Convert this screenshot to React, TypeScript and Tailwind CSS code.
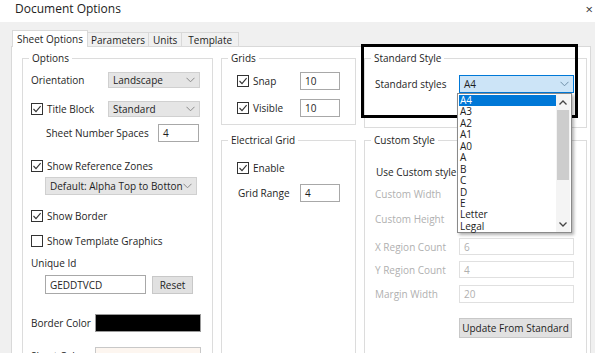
import React from 'react';

const Check = ({ checked = true }: { checked?: boolean }) => (
  <svg width="12" height="12" viewBox="0 0 12 12" className="shrink-0">
    <rect x="0.5" y="0.5" width="11" height="11" fill="#fff" stroke="#333" />
    {checked && <polyline points="2.5,6 5,8.6 9.6,3.2" fill="none" stroke="#333" strokeWidth="1.1" />}
  </svg>
);

const Chevron = ({ color = '#8a8a8a' }: { color?: string }) => (
  <svg width="9" height="6" viewBox="0 0 9 6" className="shrink-0">
    <polyline points="0.5,0.8 4.5,4.8 8.5,0.8" fill="none" stroke={color} strokeWidth="1" />
  </svg>
);

const Group = ({ label, className, children }: { label: string; className: string; children?: React.ReactNode }) => (
  <div className={`relative border border-[#dcdcdc] ${className}`}>
    <span className="absolute -top-[8px] left-[6px] bg-white px-[3px] leading-[14px]">{label}</span>
    {children}
  </div>
);

const Select = ({ value, className }: { value: string; className: string }) => (
  <div className={`flex items-center justify-between bg-[#e5e5e5] border border-[#d0d0d0] pl-[4px] pr-[4px] overflow-hidden ${className}`}>
    <span className="whitespace-nowrap overflow-hidden">{value}</span>
    <Chevron />
  </div>
);

const Input = ({ value, className, disabled = false }: { value: string; className: string; disabled?: boolean }) => (
  <div
    className={`flex items-center bg-white border pl-[4px] ${
      disabled ? 'border-[#e0e0e0] text-[#b0b0b0]' : 'border-[#a8a8a8]'
    } ${className}`}
  >
    {value}
  </div>
);

const CheckRow = ({ label, checked = true, className = '' }: { label: string; checked?: boolean; className?: string }) => (
  <div className={`flex items-center gap-[4px] ${className}`}>
    <Check checked={checked} />
    <span className="whitespace-nowrap">{label}</span>
  </div>
);

const sizes = ['A4', 'A3', 'A2', 'A1', 'A0', 'A', 'B', 'C', 'D', 'E', 'Letter', 'Legal'];

export default function App() {
  return (
    <div className="relative w-[595px] h-[353px] overflow-hidden bg-white text-[10px] leading-[14px] text-[#1e1e1e] font-['Open_Sans',sans-serif]">
      {/* title bar */}
      <div className="h-[22px] flex justify-between pl-[15px] pr-[2px] pt-[1px]">
        <span className="text-[12px] leading-[16px] text-[#222]">Document Options</span>
        <span className="text-[13px] leading-[16px] text-[#333]">×</span>
      </div>

      {/* dialog body */}
      <div className="bg-[#f0f0f0] pt-[8px] h-[331px]">
        <div className="flex items-end ml-[12px] h-[16px]">
          <div className="relative z-10 -mb-px h-[17px] bg-white border border-b-0 border-[#d9d9d9] px-[4px] flex items-center">
            Sheet Options
          </div>
          <div className="h-[14px] border border-b-0 border-l-0 border-[#d9d9d9] px-[3px] flex items-center">Parameters</div>
          <div className="h-[14px] border border-b-0 border-l-0 border-[#d9d9d9] px-[4px] flex items-center">Units</div>
          <div className="h-[14px] border border-b-0 border-l-0 border-[#d9d9d9] px-[6px] flex items-center">Template</div>
        </div>

        {/* tab page */}
        <div className="ml-[11px] w-[580px] h-[320px] bg-white border border-[#d9d9d9] flex items-start gap-[8px] pl-[10px] pt-[11px]">
          {/* Options */}
          <Group label="Options" className="w-[191px] h-[320px] shrink-0 flex flex-col">
            <div className="mt-[13px] h-[16px] flex items-center pl-[8px]">
              <span className="w-[77px]">Orientation</span>
              <Select value="Landscape" className="w-[92px] h-[16px]" />
            </div>
            <div className="mt-[13px] h-[16px] flex items-center pl-[8px]">
              <CheckRow label="Title Block" className="w-[77px]" />
              <Select value="Standard" className="w-[92px] h-[16px]" />
            </div>
            <div className="mt-[7px] h-[18px] flex items-center pl-[23px]">
              <span className="w-[112px]">Sheet Number Spaces</span>
              <Input value="4" className="w-[41px] h-[18px]" />
            </div>
            <CheckRow label="Show Reference Zones" className="mt-[16px] h-[16px] pl-[8px]" />
            <Select value="Default: Alpha Top to Botton" className="mt-[3px] ml-[22px] w-[152px] h-[18px]" />
            <CheckRow label="Show Border" className="mt-[13px] h-[16px] pl-[8px]" />
            <CheckRow label="Show Template Graphics" checked={false} className="mt-[9px] h-[16px] pl-[8px]" />
            <div className="mt-[6px] h-[16px] flex items-center pl-[8px]">Unique Id</div>
            <div className="mt-[4px] h-[19px] flex items-center pl-[22px] gap-[6px]">
              <Input value="GEDDTVCD" className="w-[101px] h-[19px]" />
              <div className="w-[41px] h-[18px] bg-[#e1e1e1] border border-[#c8c8c8] flex items-center justify-center">Reset</div>
            </div>
            <div className="mt-[20px] h-[18px] flex items-center pl-[8px]">
              <span className="w-[64px] whitespace-nowrap">Border Color</span>
              <div className="w-[106px] h-[18px] bg-black border border-[#9a9a9a]" />
            </div>
            <div className="mt-[15px] h-[18px] flex items-center pl-[8px]">
              <span className="w-[64px] whitespace-nowrap">Sheet Color</span>
              <div className="w-[106px] h-[18px] bg-[#fdf6f0] border border-[#c8c8c8]" />
            </div>
          </Group>

          {/* Grids / Electrical */}
          <div className="w-[135px] shrink-0 flex flex-col gap-[15px]">
            <Group label="Grids" className="h-[67px] flex flex-col">
              <div className="mt-[13px] h-[18px] flex items-center pl-[15px]">
                <CheckRow label="Snap" className="w-[63px]" />
                <Input value="10" className="w-[40px] h-[18px]" />
              </div>
              <div className="mt-[9px] h-[18px] flex items-center pl-[15px]">
                <CheckRow label="Visible" className="w-[63px]" />
                <Input value="10" className="w-[40px] h-[18px]" />
              </div>
            </Group>
            <Group label="Electrical Grid" className="h-[230px] flex flex-col">
              <CheckRow label="Enable" className="mt-[19px] h-[16px] pl-[15px]" />
              <div className="mt-[8px] h-[18px] flex items-center pl-[16px]">
                <span className="w-[62px] whitespace-nowrap">Grid Range</span>
                <Input value="4" className="w-[40px] h-[18px]" />
              </div>
            </Group>
          </div>

          {/* Standard / Custom */}
          <div className="w-[223px] shrink-0 flex flex-col gap-[12px]">
            <Group label="Standard Style" className="h-[70px] flex flex-col">
              <div className="mt-[16px] h-[18px] flex items-center pl-[10px]">
                <span className="w-[84px] whitespace-nowrap">Standard styles</span>
                <div className="w-[115px] h-[18px] bg-[#cce4f7] border border-[#0078d7] flex items-center justify-between pl-[4px] pr-[4px]">
                  <span>A4</span>
                  <Chevron color="#6f8fa8" />
                </div>
              </div>
            </Group>
            <Group label="Custom Style" className="h-[230px] flex flex-col">
              <div className="mt-[23px] h-[16px] flex items-center pl-[11px]">Use Custom style</div>
              <div className="mt-[6px] h-[16px] flex items-center pl-[10px] text-[#b0b0b0]">Custom Width</div>
              <div className="mt-[9px] h-[16px] flex items-center pl-[10px] text-[#b0b0b0]">Custom Height</div>
              <div className="mt-[11px] h-[17px] flex items-center pl-[10px]">
                <span className="w-[84px] text-[#b0b0b0] whitespace-nowrap">X Region Count</span>
                <Input value="6" disabled className="w-[115px] h-[17px]" />
              </div>
              <div className="mt-[6px] h-[17px] flex items-center pl-[10px]">
                <span className="w-[84px] text-[#b0b0b0] whitespace-nowrap">Y Region Count</span>
                <Input value="4" disabled className="w-[115px] h-[17px]" />
              </div>
              <div className="mt-[7px] h-[18px] flex items-center pl-[10px]">
                <span className="w-[84px] text-[#b0b0b0] whitespace-nowrap">Margin Width</span>
                <Input value="20" disabled className="w-[115px] h-[18px]" />
              </div>
              <div className="mt-[15px] h-[20px] flex items-center pl-[94px]">
                <div className="w-[113px] h-[20px] bg-[#e1e1e1] border border-[#c8c8c8] flex items-center justify-center whitespace-nowrap">
                  Update From Standard
                </div>
              </div>
            </Group>
          </div>
        </div>
      </div>

      {/* annotation frame */}
      <div className="absolute left-[361px] top-[44px] w-[217px] h-[74px] border-[3px] border-black" />

      {/* open dropdown list */}
      <div className="absolute left-[457px] top-[93px] w-[115px] h-[140px] bg-white border border-[#8a8a8a] shadow-[2px_2px_3px_rgba(0,0,0,0.3)] flex">
        <div className="flex-1 pl-[1px] pt-[1px]">
          {sizes.map((s, i) => (
            <div
              key={s}
              className={`h-[11.45px] leading-[11.45px] pl-[1px] text-[10px] ${i === 0 ? 'bg-[#0078d7] text-white' : 'text-[#222]'}`}
            >
              {s}
            </div>
          ))}
        </div>
        <div className="w-[14px] mr-[1px] flex flex-col bg-[#f4f4f4]">
          <div className="h-[16px] flex items-center justify-center">
            <svg width="8" height="5" viewBox="0 0 8 5">
              <polyline points="0.5,4.5 4,1 7.5,4.5" fill="none" stroke="#444" strokeWidth="1.3" />
            </svg>
          </div>
          <div className="h-[70px] mx-[1px] bg-[#cdcdcd]" />
          <div className="flex-1" />
          <div className="h-[16px] flex items-center justify-center">
            <svg width="8" height="5" viewBox="0 0 8 5">
              <polyline points="0.5,0.5 4,4 7.5,0.5" fill="none" stroke="#444" strokeWidth="1.3" />
            </svg>
          </div>
        </div>
      </div>
    </div>
  );
}
